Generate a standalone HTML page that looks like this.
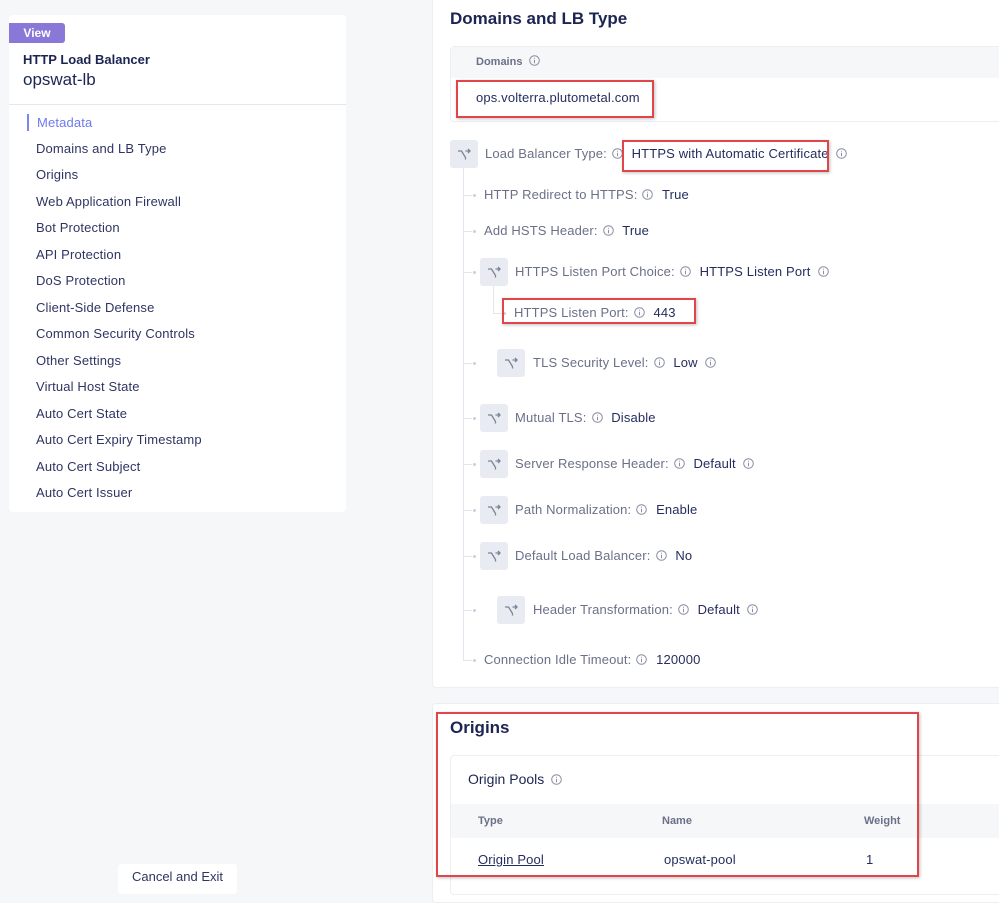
<!DOCTYPE html>
<html><head><meta charset="utf-8"><style>
*{margin:0;padding:0;box-sizing:border-box}
body{width:999px;height:884px;background:#f6f7f9;font-family:"Liberation Sans",sans-serif;position:relative;overflow:hidden;color:#2b3262}
.a{position:absolute;white-space:nowrap}
.t{position:absolute;white-space:nowrap;font-size:13px;line-height:16px;letter-spacing:.15px}
.l{color:#6b7088}
.v{color:#252d5e}
.nav{position:absolute;left:36px;font-size:13px;line-height:16px;color:#2f3562;letter-spacing:.15px}
.ic{position:absolute;width:28px;height:28px;background:#e9ebf2;border-radius:3px}
.ic svg{position:absolute;left:7px;top:7px}
.i{display:inline-block;vertical-align:-1px;margin:0 5px}
.red{position:absolute;border:2px solid #e0454a;box-shadow:1px 1px 3px rgba(0,0,0,.25)}
.dot{position:absolute;width:3px;height:3px;border-radius:50%;background:#ccd0dc}
.hl{position:absolute;height:1px;background:#e3e6ee}
</style></head><body>
<!-- sidebar -->
<div class="a" style="left:9px;top:15px;width:337px;height:497px;background:#fff;border-radius:4px"></div>
<div class="a" style="left:9px;top:23px;width:56px;height:20px;background:#8a78d8;border-radius:0 3px 3px 0;color:#fff;font-weight:bold;font-size:12px;line-height:20px;text-align:center">View</div>
<div class="a" style="left:23px;top:52px;font-size:13px;font-weight:bold;color:#1c2452">HTTP Load Balancer</div>
<div class="a" style="left:23px;top:70px;font-size:17px;color:#1c2452">opswat-lb</div>
<div class="a" style="left:9px;top:104px;width:337px;height:1px;background:#e4e6f0"></div>
<div class="a" style="left:27px;top:114px;width:2px;height:17px;background:#7b84f2"></div>
<div class="nav" style="top:115px;left:37px;color:#6f79f0">Metadata</div>
<div class="nav" style="top:141px">Domains and LB Type</div>
<div class="nav" style="top:167px">Origins</div>
<div class="nav" style="top:194px">Web Application Firewall</div>
<div class="nav" style="top:220px">Bot Protection</div>
<div class="nav" style="top:247px">API Protection</div>
<div class="nav" style="top:273px">DoS Protection</div>
<div class="nav" style="top:300px">Client-Side Defense</div>
<div class="nav" style="top:326px">Common Security Controls</div>
<div class="nav" style="top:353px">Other Settings</div>
<div class="nav" style="top:379px">Virtual Host State</div>
<div class="nav" style="top:406px">Auto Cert State</div>
<div class="nav" style="top:432px">Auto Cert Expiry Timestamp</div>
<div class="nav" style="top:459px">Auto Cert Subject</div>
<div class="nav" style="top:485px">Auto Cert Issuer</div>
<div class="a" style="left:118px;top:864px;width:119px;height:30px;background:#fff;border-radius:3px;font-size:13px;color:#2f3562;text-align:center;line-height:26px">Cancel and Exit</div>

<!-- main card -->
<div class="a" style="left:432px;top:-5px;width:580px;height:693px;background:#fff;border:1px solid #eceef3;border-radius:4px"></div>
<div class="a" style="left:450px;top:9px;font-size:17px;font-weight:bold;color:#1c2452">Domains and LB Type</div>
<div class="a" style="left:450px;top:46px;width:560px;height:76px;border:1px solid #eceef3;border-radius:4px"></div>
<div class="a" style="left:451px;top:47px;width:560px;height:31px;background:#f6f7f9"></div>
<div class="a" style="left:476px;top:55px;font-size:11px;font-weight:bold;color:#6b7088">Domains<svg class="i" width="11" height="11" style="margin-left:7px"><circle cx="5.5" cy="5.5" r="4.8" fill="none" stroke="#8a8fa3"/><path d="M5.5 4.8v3.4M5.5 2.8v.8" stroke="#8a8fa3"/></svg></div>
<div class="t v" style="left:476px;top:90px">ops.volterra.plutometal.com</div>
<div class="red" style="left:456px;top:80px;width:198px;height:38px"></div>

<!-- tree lines -->
<div class="a" style="left:463px;top:168px;width:1px;height:492px;background:#e3e6ee"></div>
<div class="a" style="left:493px;top:286px;width:1px;height:27px;background:#e3e6ee"></div>
<div class="hl" style="left:463px;top:195px;width:9px"></div><div class="dot" style="left:473px;top:194px"></div>
<div class="hl" style="left:463px;top:231px;width:9px"></div><div class="dot" style="left:473px;top:230px"></div>
<div class="hl" style="left:463px;top:272px;width:9px"></div><div class="dot" style="left:473px;top:271px"></div>
<div class="hl" style="left:493px;top:313px;width:9px"></div><div class="dot" style="left:503px;top:312px"></div>
<div class="hl" style="left:463px;top:363px;width:9px"></div><div class="dot" style="left:473px;top:362px"></div>
<div class="hl" style="left:463px;top:418px;width:9px"></div><div class="dot" style="left:473px;top:417px"></div>
<div class="hl" style="left:463px;top:464px;width:9px"></div><div class="dot" style="left:473px;top:463px"></div>
<div class="hl" style="left:463px;top:510px;width:9px"></div><div class="dot" style="left:473px;top:509px"></div>
<div class="hl" style="left:463px;top:556px;width:9px"></div><div class="dot" style="left:473px;top:555px"></div>
<div class="hl" style="left:463px;top:610px;width:9px"></div><div class="dot" style="left:473px;top:609px"></div>
<div class="hl" style="left:463px;top:660px;width:9px"></div><div class="dot" style="left:473px;top:659px"></div>

<!-- icons -->
<div class="ic" style="left:450px;top:140px"><svg width="14" height="14" fill="none" stroke="#7d8296" stroke-width="1.3"><path d="M1 4h3.5l4 6.5M8.5 4H13M11 2l2 2-2 2M8.5 10.5v2"/></svg></div>
<div class="ic" style="left:480px;top:258px"><svg width="14" height="14" fill="none" stroke="#7d8296" stroke-width="1.3"><path d="M1 4h3.5l4 6.5M8.5 4H13M11 2l2 2-2 2M8.5 10.5v2"/></svg></div>
<div class="ic" style="left:497px;top:349px"><svg width="14" height="14" fill="none" stroke="#7d8296" stroke-width="1.3"><path d="M1 4h3.5l4 6.5M8.5 4H13M11 2l2 2-2 2M8.5 10.5v2"/></svg></div>
<div class="ic" style="left:480px;top:404px"><svg width="14" height="14" fill="none" stroke="#7d8296" stroke-width="1.3"><path d="M1 4h3.5l4 6.5M8.5 4H13M11 2l2 2-2 2M8.5 10.5v2"/></svg></div>
<div class="ic" style="left:480px;top:450px"><svg width="14" height="14" fill="none" stroke="#7d8296" stroke-width="1.3"><path d="M1 4h3.5l4 6.5M8.5 4H13M11 2l2 2-2 2M8.5 10.5v2"/></svg></div>
<div class="ic" style="left:480px;top:496px"><svg width="14" height="14" fill="none" stroke="#7d8296" stroke-width="1.3"><path d="M1 4h3.5l4 6.5M8.5 4H13M11 2l2 2-2 2M8.5 10.5v2"/></svg></div>
<div class="ic" style="left:480px;top:542px"><svg width="14" height="14" fill="none" stroke="#7d8296" stroke-width="1.3"><path d="M1 4h3.5l4 6.5M8.5 4H13M11 2l2 2-2 2M8.5 10.5v2"/></svg></div>
<div class="ic" style="left:497px;top:596px"><svg width="14" height="14" fill="none" stroke="#7d8296" stroke-width="1.3"><path d="M1 4h3.5l4 6.5M8.5 4H13M11 2l2 2-2 2M8.5 10.5v2"/></svg></div>

<!-- rows -->
<div class="t" style="left:485px;top:146px"><span class="l">Load Balancer Type:</span><svg class="i" width="11" height="11"><circle cx="5.5" cy="5.5" r="4.8" fill="none" stroke="#8a8fa3"/><path d="M5.5 4.8v3.4M5.5 2.8v.8" stroke="#8a8fa3"/></svg> <span class="v">HTTPS with Automatic Certificate</span><svg class="i" width="11" height="11" style="margin-left:7px"><circle cx="5.5" cy="5.5" r="4.8" fill="none" stroke="#8a8fa3"/><path d="M5.5 4.8v3.4M5.5 2.8v.8" stroke="#8a8fa3"/></svg></div>
<div class="red" style="left:622px;top:140px;width:207px;height:32px"></div>
<div class="t" style="left:484px;top:187px"><span class="l">HTTP Redirect to HTTPS:</span><svg class="i" width="11" height="11"><circle cx="5.5" cy="5.5" r="4.8" fill="none" stroke="#8a8fa3"/><path d="M5.5 4.8v3.4M5.5 2.8v.8" stroke="#8a8fa3"/></svg> <span class="v">True</span></div>
<div class="t" style="left:484px;top:223px"><span class="l">Add HSTS Header:</span><svg class="i" width="11" height="11"><circle cx="5.5" cy="5.5" r="4.8" fill="none" stroke="#8a8fa3"/><path d="M5.5 4.8v3.4M5.5 2.8v.8" stroke="#8a8fa3"/></svg> <span class="v">True</span></div>
<div class="t" style="left:515px;top:264px"><span class="l">HTTPS Listen Port Choice:</span><svg class="i" width="11" height="11"><circle cx="5.5" cy="5.5" r="4.8" fill="none" stroke="#8a8fa3"/><path d="M5.5 4.8v3.4M5.5 2.8v.8" stroke="#8a8fa3"/></svg> <span class="v">HTTPS Listen Port</span><svg class="i" width="11" height="11" style="margin-left:7px"><circle cx="5.5" cy="5.5" r="4.8" fill="none" stroke="#8a8fa3"/><path d="M5.5 4.8v3.4M5.5 2.8v.8" stroke="#8a8fa3"/></svg></div>
<div class="t" style="left:514px;top:305px"><span class="l">HTTPS Listen Port:</span><svg class="i" width="11" height="11"><circle cx="5.5" cy="5.5" r="4.8" fill="none" stroke="#8a8fa3"/><path d="M5.5 4.8v3.4M5.5 2.8v.8" stroke="#8a8fa3"/></svg> <span class="v">443</span></div>
<div class="red" style="left:502px;top:298px;width:194px;height:26px"></div>
<div class="t" style="left:533px;top:355px"><span class="l">TLS Security Level:</span><svg class="i" width="11" height="11"><circle cx="5.5" cy="5.5" r="4.8" fill="none" stroke="#8a8fa3"/><path d="M5.5 4.8v3.4M5.5 2.8v.8" stroke="#8a8fa3"/></svg> <span class="v">Low</span><svg class="i" width="11" height="11" style="margin-left:7px"><circle cx="5.5" cy="5.5" r="4.8" fill="none" stroke="#8a8fa3"/><path d="M5.5 4.8v3.4M5.5 2.8v.8" stroke="#8a8fa3"/></svg></div>
<div class="t" style="left:515px;top:410px"><span class="l">Mutual TLS:</span><svg class="i" width="11" height="11"><circle cx="5.5" cy="5.5" r="4.8" fill="none" stroke="#8a8fa3"/><path d="M5.5 4.8v3.4M5.5 2.8v.8" stroke="#8a8fa3"/></svg> <span class="v">Disable</span></div>
<div class="t" style="left:515px;top:456px"><span class="l">Server Response Header:</span><svg class="i" width="11" height="11"><circle cx="5.5" cy="5.5" r="4.8" fill="none" stroke="#8a8fa3"/><path d="M5.5 4.8v3.4M5.5 2.8v.8" stroke="#8a8fa3"/></svg> <span class="v">Default</span><svg class="i" width="11" height="11" style="margin-left:7px"><circle cx="5.5" cy="5.5" r="4.8" fill="none" stroke="#8a8fa3"/><path d="M5.5 4.8v3.4M5.5 2.8v.8" stroke="#8a8fa3"/></svg></div>
<div class="t" style="left:515px;top:502px"><span class="l">Path Normalization:</span><svg class="i" width="11" height="11"><circle cx="5.5" cy="5.5" r="4.8" fill="none" stroke="#8a8fa3"/><path d="M5.5 4.8v3.4M5.5 2.8v.8" stroke="#8a8fa3"/></svg> <span class="v">Enable</span></div>
<div class="t" style="left:515px;top:548px"><span class="l">Default Load Balancer:</span><svg class="i" width="11" height="11"><circle cx="5.5" cy="5.5" r="4.8" fill="none" stroke="#8a8fa3"/><path d="M5.5 4.8v3.4M5.5 2.8v.8" stroke="#8a8fa3"/></svg> <span class="v">No</span></div>
<div class="t" style="left:533px;top:602px"><span class="l">Header Transformation:</span><svg class="i" width="11" height="11"><circle cx="5.5" cy="5.5" r="4.8" fill="none" stroke="#8a8fa3"/><path d="M5.5 4.8v3.4M5.5 2.8v.8" stroke="#8a8fa3"/></svg> <span class="v">Default</span><svg class="i" width="11" height="11" style="margin-left:7px"><circle cx="5.5" cy="5.5" r="4.8" fill="none" stroke="#8a8fa3"/><path d="M5.5 4.8v3.4M5.5 2.8v.8" stroke="#8a8fa3"/></svg></div>
<div class="t" style="left:484px;top:652px"><span class="l">Connection Idle Timeout:</span><svg class="i" width="11" height="11"><circle cx="5.5" cy="5.5" r="4.8" fill="none" stroke="#8a8fa3"/><path d="M5.5 4.8v3.4M5.5 2.8v.8" stroke="#8a8fa3"/></svg> <span class="v">120000</span></div>

<!-- origins card -->
<div class="a" style="left:432px;top:703px;width:580px;height:200px;background:#fff;border:1px solid #eceef3;border-radius:4px"></div>
<div class="a" style="left:450px;top:718px;font-size:17px;font-weight:bold;color:#1c2452">Origins</div>
<div class="a" style="left:450px;top:755px;width:560px;height:140px;border:1px solid #eceef3;border-radius:4px"></div>
<div class="a" style="left:468px;top:771px;font-size:14px;color:#1c2452">Origin Pools<svg class="i" width="11" height="11" style="margin-left:7px"><circle cx="5.5" cy="5.5" r="4.8" fill="none" stroke="#8a8fa3"/><path d="M5.5 4.8v3.4M5.5 2.8v.8" stroke="#8a8fa3"/></svg></div>
<div class="a" style="left:451px;top:804px;width:560px;height:34px;background:#f6f7f9"></div>
<div class="a" style="left:478px;top:815px;font-size:11px;font-weight:bold;color:#6b7088">Type</div>
<div class="a" style="left:662px;top:815px;font-size:11px;font-weight:bold;color:#6b7088">Name</div>
<div class="a" style="left:864px;top:815px;font-size:11px;font-weight:bold;color:#6b7088">Weight</div>
<div class="t v" style="left:478px;top:852px;text-decoration:underline">Origin Pool</div>
<div class="t v" style="left:664px;top:852px">opswat-pool</div>
<div class="t v" style="left:866px;top:852px">1</div>
<div class="red" style="left:436px;top:712px;width:483px;height:165px"></div>
</body></html>
